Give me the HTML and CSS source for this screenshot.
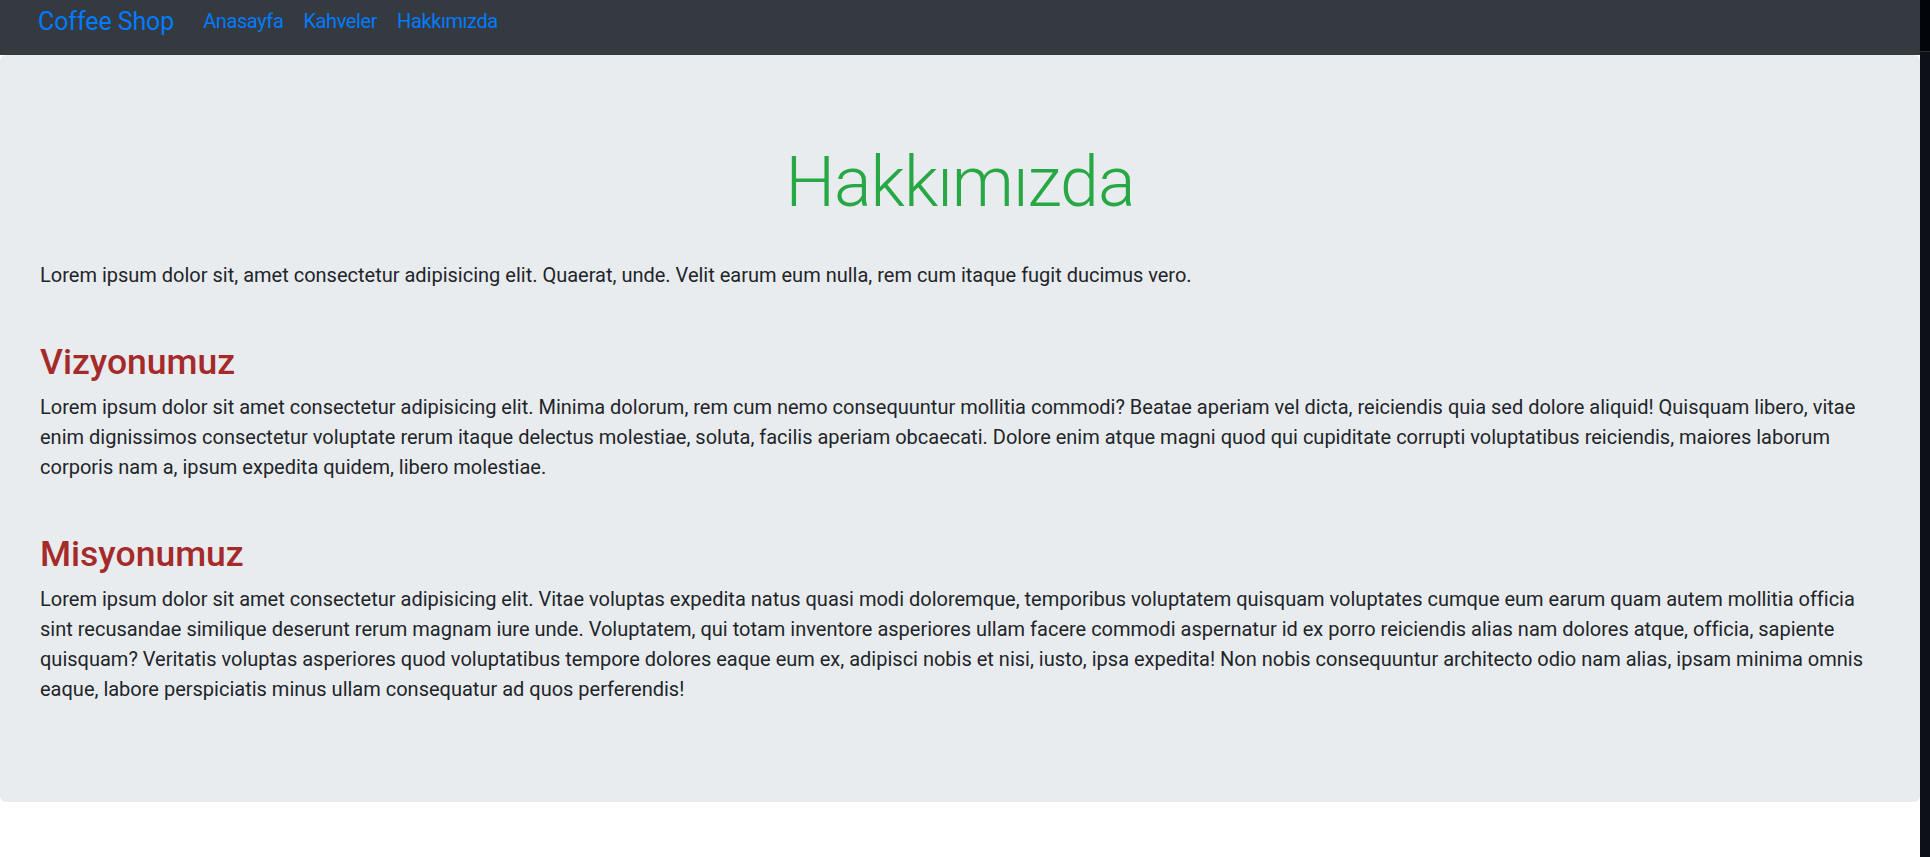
FILE: index.html
```html
<!DOCTYPE html>
<html lang="tr">
<head>
<meta charset="utf-8">
<title>Hakkımızda - Coffee Shop</title>
<link rel="stylesheet" href="styles.css">
</head>
<body>
<div class="window">
  <div class="page">
    <nav class="navbar">
      <a class="brand" href="#">Coffee Shop</a>
      <ul class="nav-links">
        <li><a href="#">Anasayfa</a></li>
        <li><a href="#">Kahveler</a></li>
        <li><a href="#">Hakkımızda</a></li>
      </ul>
    </nav>
    <main class="jumbotron">
      <h1 class="display">Hakkımızda</h1>
      <p class="text">Lorem ipsum dolor sit, amet consectetur adipisicing elit. Quaerat, unde. Velit earum eum nulla, rem cum itaque fugit ducimus vero.</p>
      <section class="block">
        <h2 class="block-title">Vizyonumuz</h2>
        <p class="text">Lorem ipsum dolor sit amet consectetur adipisicing elit. Minima dolorum, rem cum nemo consequuntur mollitia commodi? Beatae aperiam vel dicta, reiciendis quia sed dolore aliquid! Quisquam libero, vitae enim dignissimos consectetur voluptate rerum itaque delectus molestiae, soluta, facilis aperiam obcaecati. Dolore enim atque magni quod qui cupiditate corrupti voluptatibus reiciendis, maiores laborum corporis nam a, ipsum expedita quidem, libero molestiae.</p>
      </section>
      <section class="block">
        <h2 class="block-title">Misyonumuz</h2>
        <p class="text">Lorem ipsum dolor sit amet consectetur adipisicing elit. Vitae voluptas expedita natus quasi modi doloremque, temporibus voluptatem quisquam voluptates cumque eum earum quam autem mollitia officia sint recusandae similique deserunt rerum magnam iure unde. Voluptatem, qui totam inventore asperiores ullam facere commodi aspernatur id ex porro reiciendis alias nam dolores atque, officia, sapiente quisquam? Veritatis voluptas asperiores quod voluptatibus tempore dolores eaque eum ex, adipisci nobis et nisi, iusto, ipsa expedita! Non nobis consequuntur architecto odio nam alias, ipsam minima omnis eaque, labore perspiciatis minus ullam consequatur ad quos perferendis!</p>
      </section>
    </main>
  </div>
  <div class="edge">
    <div class="edge-top"></div>
    <div class="edge-bottom"></div>
  </div>
</div>
</body>
</html>
```
FILE: styles.css
```css
html, body {
  margin: 0;
  padding: 0;
  height: 100%;
}
body {
  font-family: Roboto, "Liberation Sans", sans-serif;
  color: #212529;
  background: #ffffff;
  overflow: hidden;
}
.window {
  display: flex;
  min-height: 100%;
}
.page {
  flex: 1;
  min-width: 0;
  background: #ffffff;
}
.edge {
  width: 10px;
  display: flex;
  flex-direction: column;
}
.edge-top {
  height: 51px;
  background: #02050a;
  border-bottom: 1px solid #2c2f36;
}
.edge-bottom {
  flex: 1;
  background: #0d1017;
}

/* Navbar */
.navbar {
  height: 55px;
  box-sizing: border-box;
  background: #343a40;
  display: flex;
  align-items: flex-start;
  padding: 6px 38px 0;
}
.brand {
  font-size: 25px;
  line-height: 31px;
  color: #007bff;
  text-decoration: none;
  margin-right: 19px;
  letter-spacing: -0.1px;
}
.nav-links {
  list-style: none;
  margin: 0;
  padding: 0;
  display: flex;
}
.nav-links a {
  display: block;
  padding: 0 10px;
  font-size: 20px;
  line-height: 30px;
  color: #007bff;
  text-decoration: none;
  letter-spacing: -0.4px;
}

/* Jumbotron */
.jumbotron {
  display: block;
  background: #e9ecef;
  border-radius: 6px;
  padding: 85px 40px 78px;
  margin-bottom: 40px;
}
.display {
  margin: 0 0 36px;
  text-align: center;
  font-size: 70px;
  line-height: 84px;
  font-weight: 300;
  letter-spacing: -1px;
  color: #28a745;
}
.text {
  margin: 0 0 20px;
  font-size: 20px;
  line-height: 30px;
}
.block {
  padding-top: 31px;
}
.block + .block {
  padding-top: 31px;
}
.block-title {
  margin: 0 0 9px;
  font-size: 35.5px;
  line-height: 42px;
  font-weight: 500;
  color: #a52a2a;
}
```
